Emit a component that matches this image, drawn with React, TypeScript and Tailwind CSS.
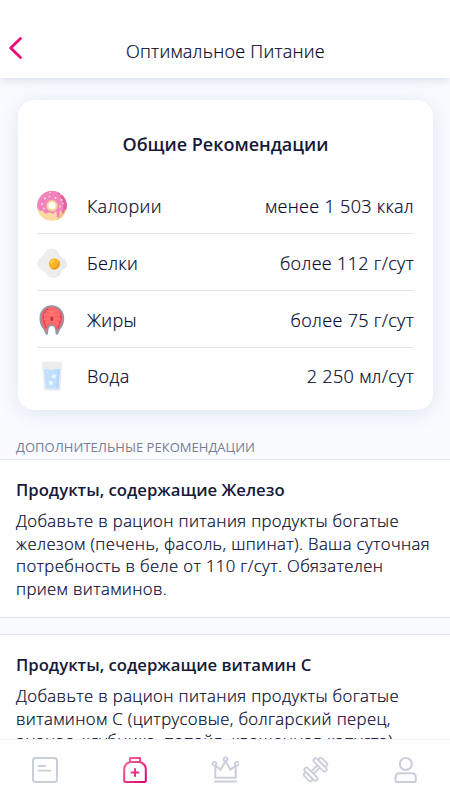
import type { ReactNode } from "react";

interface Nutrient {
  id: string;
  label: string;
  value: string;
  icon: ReactNode;
}

interface Recommendation {
  id: string;
  title: string;
  lines: string[];
}

function DonutIcon() {
  return (
    <svg width="30" height="30" viewBox="0 0 30 30" aria-hidden="true">
      <circle cx="15" cy="15" r="14.8" fill="#fed8a2" />
      <path d="M24 3.5A14.8 14.8 0 0 1 18 29.4C27 24 28 12 22 2.2z" fill="#f5c084" />
      <path d="M.4 17A14.8 14.8 0 1 1 29.5 17.5c-.6 1.500-2.400 1.500-2.700 3.200-.2 2.200-2.200 2-2.400 0 0-1.600-1.700-1.400-1.800.3l-.2 4c-.3 2-2.600 2-2.700 0v-3.500c-.1-1.500-1.800-1.600-2-.2-.4 1.600-2.300 1.700-3.300.7-1.600-1.600-2.600-.6-4 .2-2 .9-3-.5-3.900-1.800C5 18.600 2.500 21.500.4 17z" fill="#f283bd" />
      <path d="M22 2A14.800 14.800 0 0 1 29.500 17.500c-.6 1.500-2.400 1.500-2.700 3.200-.2 1-.7 1.500-1.200 1.500C27.500 15 26.500 7.500 20 1.200z" fill="#e3609f" />
      <circle cx="15" cy="14.700" r="5.700" fill="#fbd39b" />
      <circle cx="15" cy="14.700" r="3.600" fill="#fff" />
      <g fill="#fde6dc">
        <circle cx="8" cy="7.500" r="1" />
        <circle cx="12.500" cy="5.500" r=".8" />
        <circle cx="18.500" cy="7" r="1" />
        <circle cx="24.500" cy="9" r="1" />
        <circle cx="5" cy="13" r="1" />
        <circle cx="7" cy="17.500" r=".9" />
        <circle cx="23" cy="15.500" r="1" />
        <circle cx="26" cy="12.500" r=".7" />
        <circle cx="13" cy="1.500" r=".8" />
        <circle cx="24" cy="3.500" r=".8" />
      </g>
    </svg>
  );
}

function EggIcon() {
  return (
    <svg width="30" height="30" viewBox="0 0 30 30" aria-hidden="true">
      <path d="M9.500 2.200C12-.2 18-.4 20 3c1.500 2.500 1.800 4.500 5 6.600 3.500 2.300 6 5.500 4.400 8.800-1.200 2.600-4 2.500-5.300 5.600C22.700 28 19 30.500 14.500 29.700c-3-.6-4.300-2.800-6-5C6.500 22 2 21.500.6 17.500-.8 13.500 2.500 11 4.500 9 6.500 6.700 7.200 4.300 9.500 2.200z" fill="#eeeeef" />
      <path d="M17 1c1.300.3 2.300 1 3 2 1.500 2.500 1.800 4.500 5 6.600 3.500 2.300 6 5.500 4.400 8.800-1.200 2.600-4 2.500-5.300 5.600C22.700 28 19 30.500 14.500 29.700c6-1.700 6.500-5.500 8-8.200 1.800-3 4.500-4.500 2.500-7.500C22 10 19 7 17 1z" fill="#e8e9ea" />
      <circle cx="17.500" cy="16" r="5.700" fill="#fbb52b" />
      <path d="M21.500 12a5.700 5.700 0 0 1-8 8c3 .6 8.500-1.500 8-8z" fill="#ef9c20" />
      <path d="M14 15.500c.1-1.600 1-2.500 2.500-2.800" fill="none" stroke="#fed766" strokeWidth="1.300" strokeLinecap="round" />
    </svg>
  );
}

function SalmonIcon() {
  return (
    <svg width="30" height="30" viewBox="0 0 30 30" aria-hidden="true">
      <path d="M14.800.2C7.500.2 2.500 6 2.500 13c0 5.500 1.800 8.500 4 11.500 1 1.700 1.700 3 2 4.500.3 1 2.200 1 2.500 0 .5-2.700 0-8 3.800-8s3.400 5.300 3.900 8c.3 1 2.200 1 2.500 0 .3-1.500 1-2.800 2-4.500 2.200-3 4-6 4-11.500C27.200 6 22 .2 14.800.2z" fill="#8f98ad" />
      <path d="M14.800 1.800C8.600 1.800 4.200 7 4.200 13c0 5.500 2.400 8.700 5.300 14 .5-3.500.8-7.400 5.300-7.400s4.900 3.900 5.400 7.400c2.800-5.300 5.300-8.500 5.300-14 0-6-4.500-11.200-10.700-11.200z" fill="#ff6567" />
      <path d="M11 3.800C7.500 5.500 6 9 6.300 13.200c.3 4 1.700 6.500 3 10M23.500 8c2 5.500-.5 10.500-2.700 15.500" fill="none" stroke="#dd474f" strokeWidth="1.400" />
      <path d="M14.800 3v7M6.500 9.500c3 0 5.500.2 8.300 1.500 2.800-1.300 5.300-1.500 8.300-1.500M5.800 15c3-1.500 5-1.500 7.500-1M16.500 14c2.500-.5 4.500-.5 7.500 1M7.500 19.500c2-2 4-3 6.500-3.200M22.300 19.500c-2-2-4-3-6.500-3.200M9 5.500c2 .3 4 1 5.800 2.500 1.800-1.500 3.800-2.200 5.800-2.500" fill="none" stroke="#ff8f8d" strokeWidth=".6" />
      <ellipse cx="14.900" cy="13.800" rx="1.400" ry="2.300" fill="#b9323d" />
    </svg>
  );
}

function WaterIcon() {
  return (
    <svg width="30" height="30" viewBox="0 0 30 30" aria-hidden="true">
      <path d="M5 .8h20.400l-2 28.700H7z" fill="#ececee" />
      <path d="M7 8.500c3-1.700 5.500 1 8.500.3 3-.8 4.500-1.800 7.300-.5l-1.200 19.500H8.800z" fill="#c1dfff" />
      <path d="M20.500 7.700c.9 0 1.500.2 2.300.6l-1.200 19.500h-2.300z" fill="#b6d8fd" />
      <path d="m15.500 13.300 3.500.8-.8 3.500-3.500-.8z" fill="#ecf6ff" />
      <rect x="12" y="20" width="3.800" height="3.800" rx=".6" fill="#ecf6ff" />
      <circle cx="10.500" cy="11" r=".7" fill="#e3f1ff" />
      <circle cx="13" cy="13.500" r=".5" fill="#e3f1ff" />
    </svg>
  );
}

function ReportIcon() {
  return (
    <svg width="28" height="28" viewBox="0 0 28 28" fill="none" stroke="currentColor" strokeWidth="2" strokeLinecap="round" aria-hidden="true">
      <rect x="2" y="2" width="24" height="24" rx="2.500" />
      <path d="M7.500 10h6.500M7.500 14.700h12" strokeWidth="1.800" />
    </svg>
  );
}

function MedicineIcon() {
  return (
    <svg width="28" height="28" viewBox="0 0 28 28" fill="none" stroke="url(#medicine)" strokeWidth="2" strokeLinejoin="round" aria-hidden="true">
      <defs>
        <linearGradient id="medicine" x1="2" y1="4" x2="26" y2="26" gradientUnits="userSpaceOnUse">
          <stop stopColor="#f56c9c" />
          <stop offset="1" stopColor="#d6006c" />
        </linearGradient>
      </defs>
      <path d="M8.900 2h10.200v4H8.900zM8.900 6C5 7.500 3.200 9.500 3.200 13v11.500c0 1 .5 1.500 1.500 1.500h18.600c1 0 1.500-.5 1.500-1.500V13c0-3.500-1.800-5.500-5.700-7" />
      <path d="M14 12.200v8.600M9.700 16.500h8.600" />
    </svg>
  );
}

function CrownIcon() {
  return (
    <svg width="28" height="28" viewBox="0 0 28 28" fill="none" stroke="currentColor" strokeWidth="2" aria-hidden="true">
      <path d="M4.300 9.300v12.400h20.400V9.300l-5.200 4.400-5-8.400-5 8.400z" />
      <path d="M3.200 25.500h22.800" />
      <g fill="white" strokeWidth="1.700">
        <circle cx="14.500" cy="3.300" r="1.900" />
        <circle cx="3.500" cy="7.700" r="1.900" />
        <circle cx="25.800" cy="7.700" r="1.900" />
      </g>
    </svg>
  );
}

function DumbbellIcon() {
  return (
    <svg width="28" height="28" viewBox="0 0 28 28" fill="none" stroke="currentColor" strokeWidth="1.800" aria-hidden="true">
      <g transform="rotate(-45 14.500 13.500)">
        <rect x="1.900" y="8.300" width="4" height="10.400" rx="2" />
        <rect x="5.900" y="5.100" width="4.200" height="16.800" rx="2.100" />
        <rect x="18.900" y="5.100" width="4.200" height="16.800" rx="2.100" />
        <rect x="23.100" y="8.300" width="4" height="10.400" rx="2" />
        <path d="M10.100 11.900h8.800M10.100 15.100h8.800" />
      </g>
    </svg>
  );
}

function ProfileIcon() {
  return (
    <svg width="28" height="28" viewBox="0 0 28 28" fill="none" stroke="currentColor" strokeWidth="2" aria-hidden="true">
      <circle cx="14.800" cy="8" r="6" />
      <path d="M9 17.200h11.300c3 0 4.500 1.800 4.500 4.400v2.800c0 1-.5 1.500-1.500 1.500H6.100c-1 0-1.500-.5-1.500-1.500v-2.800c0-2.600 1.500-4.400 4.400-4.400z" />
    </svg>
  );
}

const NUTRIENTS: Nutrient[] = [
  { id: "calories", label: "Калории", value: "менее 1 503 ккал", icon: <DonutIcon /> },
  { id: "protein", label: "Белки", value: "более 112 г/сут", icon: <EggIcon /> },
  { id: "fat", label: "Жиры", value: "более 75 г/сут", icon: <SalmonIcon /> },
  { id: "water", label: "Вода", value: "2 250 мл/сут", icon: <WaterIcon /> },
];

const RECOMMENDATIONS: Recommendation[] = [
  {
    id: "iron",
    title: "Продукты, содержащие Железо",
    lines: [
      "Добавьте в рацион питания продукты богатые",
      "железом (печень, фасоль, шпинат). Ваша суточная",
      "потребность в беле от 110 г/сут. Обязателен",
      "прием витаминов.",
    ],
  },
  {
    id: "vitamin-c",
    title: "Продукты, содержащие витамин C",
    lines: [
      "Добавьте в рацион питания продукты богатые",
      "витамином С (цитрусовые, болгарский перец,",
      "ананас, клубника, папайя, квашенная капуста).",
    ],
  },
];

const TABS = [
  { id: "report", label: "Отчёт", icon: ReportIcon },
  { id: "medicine", label: "Рекомендации", icon: MedicineIcon },
  { id: "premium", label: "Премиум", icon: CrownIcon },
  { id: "training", label: "Тренировки", icon: DumbbellIcon },
  { id: "profile", label: "Профиль", icon: ProfileIcon },
];

export default function App() {
  return (
    <div className="flex h-[800px] w-[450px] flex-col overflow-hidden bg-[#fafbff] font-['Open_Sans','Noto_Sans',sans-serif] font-light text-[#02072c]">
      {/* Header */}
      <header className="z-10 grid h-[78px] shrink-0 grid-cols-[1fr_auto_1fr] items-end bg-[#fefefe] shadow-[0_2px_10px_rgba(80,105,130,0.2)]">
        <button className="mb-[18px] ml-2 w-4" aria-label="Назад">
          <svg width="16" height="24" viewBox="0 0 16 24" fill="none" aria-hidden="true">
            <path d="M12.500 2.500 2.700 12l9.800 9.500" stroke="#ed0878" strokeWidth="2.800" strokeLinecap="round" strokeLinejoin="round" />
          </svg>
        </button>
        <h1 className="mb-[13px] ml-[1px] text-[18px] leading-7 font-light tracking-[0.25px] [-webkit-text-stroke:0.2px]">Оптимальное Питание</h1>
      </header>

      <main className="min-h-0 flex-1 overflow-hidden">
        {/* Daily norms */}
        <section className="mt-[22px] mr-[17px] ml-[18px] h-[310px] rounded-[16px] bg-white px-[19px] pt-[30px] shadow-[0_3px_20px_rgba(90,120,180,0.18)]">
          <h2 className="mb-[19px] text-center text-[18px] leading-7 font-semibold text-[#151a3a]">Общие Рекомендации</h2>
          <ul>
            {NUTRIENTS.map(({ id, label, value, icon }) => (
              <li key={id} className="flex h-[57px] items-center border-b border-[#e3e4e8] pt-[2px] text-[18px] tracking-[0.32px] [-webkit-text-stroke:0.2px] last:border-transparent last:pt-0">
                {icon}
                <span className="ml-[20px] pt-[1px]">{label}</span>
                <span className="ml-auto pt-[1px]">{value}</span>
              </li>
            ))}
          </ul>
        </section>

        <p className="mt-[27px] mb-[2px] ml-4 text-[13px] leading-5 font-normal tracking-[0.03px] text-[#747e94]">ДОПОЛНИТЕЛЬНЫЕ РЕКОМЕНДАЦИИ</p>

        {RECOMMENDATIONS.map(({ id, title, lines }) => (
          <section key={id} className="mb-4 h-[159px] border-y border-[#e1e4ea] bg-white px-4 pt-[18px]">
            <h3 className="mb-2 text-[16.700px] leading-6 font-semibold text-[#151a3a]">{title}</h3>
            {lines.map((line) => (
              <p key={line} className="text-[16.700px] leading-[22.500px] tracking-[0.37px] whitespace-nowrap [-webkit-text-stroke:0.2px]">
                {line}
              </p>
            ))}
          </section>
        ))}
      </main>

      {/* Bottom navigation */}
      <nav className="z-10 grid h-[61px] shrink-0 grid-cols-5 border-t border-[#f0f1f6] bg-[#fefefe] pb-[1px]">
        {TABS.map(({ id, label, icon: Icon }) => (
          <button key={id} className="flex items-center justify-center text-[#c9ceda]" aria-label={label}>
            <Icon />
          </button>
        ))}
      </nav>
    </div>
  );
}
